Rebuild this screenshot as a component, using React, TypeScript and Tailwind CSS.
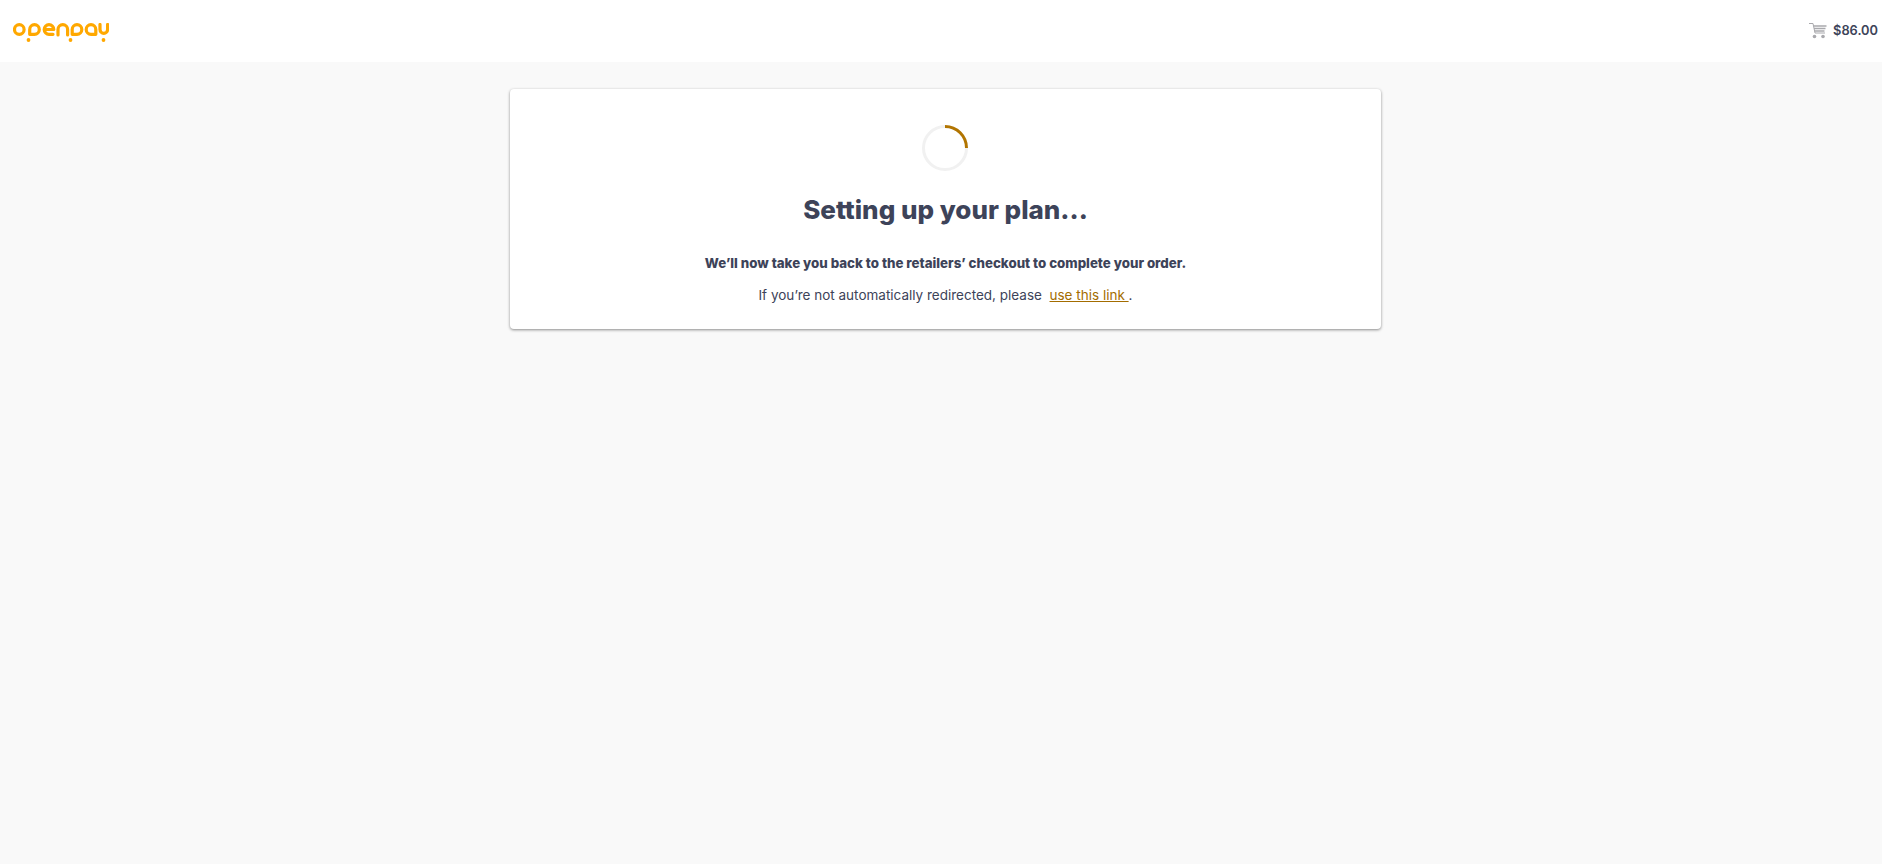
import React from 'react';

const Logo = () => (
    <svg width="96" height="20" viewBox="0 0 96 20" fill="none" stroke="#ffa800" strokeWidth="3.200" strokeLinecap="round" strokeLinejoin="round">
        <circle cx="6.300" cy="6.500" r="4.800" />
        <path d="M16.700 6.500a4.800 4.800 0 1 1 4.800 4.800h-4.800z" />
        <path d="M31.200 6.500h9.600a4.800 4.800 0 1 0-9.600 0a4.800 4.800 0 0 0 4.800 4.800h4" />
        <path d="M45 12V6.500a4.800 4.800 0 0 1 9.600 0V12" />
        <path d="M59.200 6.500a4.800 4.800 0 1 1 4.800 4.800h-4.800z" />
        <path d="M82.800 6.500a4.800 4.800 0 1 0-4.800 4.800h4.800z" />
        <path d="M87 1.500v5a3.800 3.800 0 0 0 7.600 0v-5" />
        <circle cx="15.500" cy="17" r="1.900" fill="#ffa800" stroke="none" />
        <circle cx="57.500" cy="17" r="1.900" fill="#ffa800" stroke="none" />
        <circle cx="90.500" cy="17" r="1.900" fill="#ffa800" stroke="none" />
    </svg>
);

const CartIcon = () => (
    <svg width="18" height="16" viewBox="0 0 18 16" fill="none" stroke="#a9a9ad" strokeWidth="1">
        <path d="M0 .5h4l2 9.500h10" />
        <path d="M4.500 3h13 M5 5.500h11.500 M5.500 8h10" strokeWidth="1.300" />
        <circle cx="5.500" cy="13.500" r="1.800" fill="#a9a9ad" stroke="none" />
        <circle cx="14" cy="13.500" r="1.800" fill="#a9a9ad" stroke="none" />
    </svg>
);

export default function App() {
    return (
        <div className="min-h-[864px] bg-[#f9f9f9] font-['Inter','Lato',sans-serif] text-[#3d4359]">
            <header className="h-[62px] bg-white flex items-center justify-between pl-[13px] pr-[4px]">
                <div className="pt-[3px]">
                    <Logo />
                </div>
                <div className="flex items-center gap-[6px]">
                    <CartIcon />
                    <span className="text-[12.800px] font-semibold">$86.00</span>
                </div>
            </header>
            <main className="flex justify-center pl-[9px] pt-[27px]">
                <div className="w-[871px] h-[240px] bg-white rounded-[4px] shadow-[0_1px_3px_rgba(0,0,0,0.45)] flex flex-col items-center pt-[36px]">
                    <svg className="mr-[2px]" width="46" height="46" viewBox="0 0 46 46" fill="none" strokeWidth="3">
                        <circle cx="23" cy="23" r="21.500" stroke="#f1f1f1" />
                        <path d="M23 1.500A21.500 21.500 0 0 1 44.500 23" stroke="#b27500" />
                    </svg>
                    <h1 className="mt-[21px] text-[26px] leading-[36px] font-extrabold">Setting up your plan...</h1>
                    <p className="mt-[25px] text-[13.300px] leading-[20px] font-extrabold">We’ll now take you back to the retailers’ checkout to complete your order.</p>
                    <p className="mt-[12px] text-[13.500px] leading-[20px]">
                        If you’re not automatically redirected, please&nbsp;&nbsp;
                        <a href="#" className="text-[#a36c00] underline">use this link </a>.
                    </p>
                </div>
            </main>
        </div>
    );
}
